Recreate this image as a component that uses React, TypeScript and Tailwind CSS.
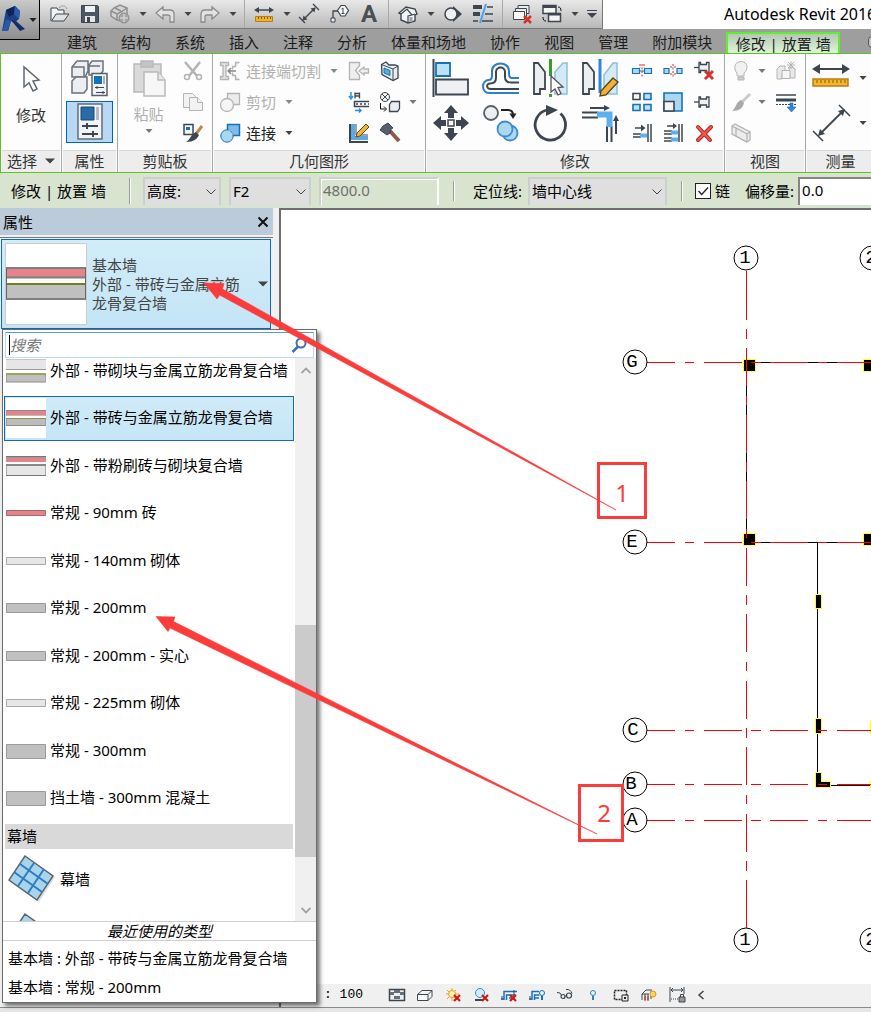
import type { ReactNode } from "react";
import clsx from "clsx";

const INK = "#3d4650";
const BLUE = "#1572b8";
const SKY = "#abd8f0";
const DIM = "#b4b4b4";

/* ---------- small helpers ---------- */

function Svg({ size, children, className }: { size: number; children: ReactNode; className?: string }) {
  return (
    <svg width={size} height={size} viewBox={`0 0 ${size} ${size}`} fill="none" className={clsx("shrink-0 overflow-visible", className)}>
      {children}
    </svg>
  );
}

function Caret({ color = "#444", wide = false }: { color?: string; wide?: boolean }) {
  return (
    <svg width="10" height="6" viewBox="0 0 10 6" className="shrink-0">
      <path d={wide ? "M0 0.5h10L5 5.5z" : "M1.5 1h7L5 5z"} fill={color} />
    </svg>
  );
}

function IconButton({ label, className, children }: { label: string; className?: string; children: ReactNode }) {
  return (
    <button type="button" aria-label={label} className={clsx("flex shrink-0 items-center justify-center", className)}>
      {children}
    </button>
  );
}

/* ---------- quick access icons (20px) ---------- */

const quickIcons = {
  open: (
    <>
      <path d="M1 17V4h6l1 2h6v4" fill="#f4f4f4" stroke={INK} />
      <path d="M1.5 17 6 10h13l-5 7z" fill="#dfe3e8" stroke={INK} />
      <path d="M9 4c3-3 6-3 8 1" stroke="#999" />
    </>
  ),
  save: (
    <>
      <path d="M1.5 1.5h16l1 1v16h-17z" fill="#4d5763" stroke={INK} />
      <path d="M5 2h10v6H5z" fill="#f1f1f1" />
      <path d="M5 12h10v6H5z" fill="#e6e6e6" />
      <path d="M7 13h3v5H7z" fill={INK} />
    </>
  ),
  sync: (
    <>
      <path d="M4 4 10 1l7 3v6l-6 7-4-1-6-4V7z" fill="#d4d4d4" stroke="#8f8f8f" strokeWidth="1.5" />
      <path d="M1 7l6 3 4-2 6-4M7 10v6M5 4l6 3" stroke="#8f8f8f" strokeWidth="1.5" />
      <circle cx="14" cy="14" r="5" fill="#a8a8a8" stroke="#8a8a8a" />
      <path d="M10 14h8M14 10v8" stroke="#e0e0e0" />
    </>
  ),
  undo: <path d="M1 9 8 3v3h7c3 0 4 2 4 4v8h-4v-5c0-1-1-2-2-2H8v4z" fill="#e2e2e2" stroke="#8c8c8c" strokeWidth="1.3" />,
  redo: <path d="M19 9 12 3v3H5c-3 0-4 2-4 4v8h4v-5c0-1 1-2 2-2h5v4z" fill="#e2e2e2" stroke="#8c8c8c" strokeWidth="1.3" />,
  measure: (
    <>
      <path d="M2 6h16" stroke={INK} strokeWidth="1.5" />
      <path d="M0 6l5-3v6zM20 6l-5-3v6z" fill={INK} />
      <path d="M1.5 12.5h17v5h-17z" fill="#f0b428" stroke="#b97d10" />
      <path d="M4.5 13v2M7.5 13v2M10.5 13v2M13.5 13v2M16.5 13v2" stroke="#8a5a08" />
    </>
  ),
  aligned: (
    <>
      <path d="M4 16 16 4" stroke={INK} strokeWidth="1.5" />
      <path d="M3.5 16.5l1-5 4 4zM16.5 3.5l-1 5-4-4z" fill={INK} />
      <path d="M0 13l6 6M14 0l6 6" stroke={INK} strokeWidth="1.3" />
    </>
  ),
  tag: (
    <>
      <path d="M12 1.5h4l3.500 5-3.500 5.500h-4L8.500 6.500z" fill="#f8f8f8" stroke={INK} strokeWidth="1.200" />
      <path d="M12.500 5l1.500-1v5.500M12.500 9.500h3" stroke={INK} />
      <path d="M9 7H4v8" stroke={INK} strokeWidth="1.300" />
      <path d="M2 14h4v4H2z" fill="#eee" stroke={INK} />
    </>
  ),
  letter: (
    <text x="10" y="18" textAnchor="middle" fontSize="24" fontWeight="700" fill="#4a4f55" fontFamily="Roboto, sans-serif">
      A
    </text>
  ),
  house: (
    <>
      <path d="M1 9 8 3l9 2 2 5-2 1v6l-7 2-7-3v-6z" fill="#f3f4f6" stroke={INK} strokeWidth="1.400" />
      <path d="M3 10l6-5 5 6-4 1v7M14 11l3-1" stroke={INK} strokeWidth="1.200" />
      <path d="M11.500 13h3v5h-3z" fill="#9aa3ad" />
    </>
  ),
  section: (
    <>
      <path d="M10 2l9 8-9 8z" fill={INK} />
      <circle cx="8" cy="10" r="6" fill="#eef0f2" stroke={INK} strokeWidth="1.500" />
    </>
  ),
  thin: (
    <>
      <path d="M0 3h9M0 10h7" stroke={INK} strokeWidth="4" />
      <path d="M0 17h5M14 3h6M12 10h8M9 17h11" stroke={INK} strokeWidth="1.500" />
      <path d="M13 0 7 19" stroke="#4ba3f0" strokeWidth="2" />
    </>
  ),
  closeHidden: (
    <>
      <path d="M6 1.500h11v8H6z" fill="#eee" stroke={INK} />
      <path d="M3.500 4.500h11v8h-11z" fill="#eee" stroke={INK} />
      <path d="M1.500 7.500h11v8h-11z" fill="#f8f8f8" stroke={INK} />
      <path d="M12 12l7 7M19 12l-7 7" stroke="#d8322c" strokeWidth="2.500" />
    </>
  ),
  windows: (
    <>
      <path d="M1 1.500h13v8H1z" fill="#f4f4f4" stroke={INK} strokeWidth="1.500" />
      <path d="M1 3h13M7 10h12" stroke={INK} strokeWidth="2" />
      <path d="M6.500 9.500h12v8h-12z" fill="#f4f4f4" stroke={INK} strokeWidth="1.500" />
      <path d="M6.500 10.500h12" stroke={INK} strokeWidth="2" />
      <path d="M16 3c2 0 3 1 3 4M4 17c-2 0-3-1-3-4" stroke="#111" />
    </>
  ),
};

function Quick({ name, label }: { name: keyof typeof quickIcons; label: string }) {
  return (
    <IconButton label={label} className="h-7 w-[30px]">
      <Svg size={20}>{quickIcons[name]}</Svg>
    </IconButton>
  );
}

function QuickMore() {
  return (
    <IconButton label="更多" className="h-7 w-[15px]">
      <Caret />
    </IconButton>
  );
}

function QuickDivider() {
  return <span className="mx-1 h-7 w-px shrink-0 bg-[#a9a9a9]" />;
}

function QuickAccess() {
  return (
    <div className="flex h-[29px] bg-white">
      <div className="flex shrink-0 items-start border-r border-b border-[#777] bg-linear-to-b from-[#e9e9e9] to-[#b8b8b8] pl-[45px]">
        <Quick name="open" label="打开" />
        <Quick name="save" label="保存" />
        <Quick name="sync" label="同步" />
        <QuickMore />
        <Quick name="undo" label="放弃" />
        <QuickMore />
        <Quick name="redo" label="重做" />
        <QuickMore />
        <QuickDivider />
        <Quick name="measure" label="测量" />
        <QuickMore />
        <Quick name="aligned" label="对齐尺寸标注" />
        <Quick name="tag" label="按类别标记" />
        <Quick name="letter" label="文字" />
        <QuickDivider />
        <Quick name="house" label="默认三维视图" />
        <QuickMore />
        <Quick name="section" label="剖面" />
        <Quick name="thin" label="细线" />
        <QuickDivider />
        <Quick name="closeHidden" label="关闭隐藏窗口" />
        <Quick name="windows" label="切换窗口" />
        <QuickMore />
        <IconButton label="自定义" className="h-7 w-[20px]">
          <svg width="10" height="8" viewBox="0 0 10 8">
            <path d="M0 0.500h10" stroke={INK} />
            <path d="M0 3h10L5 8z" fill={INK} />
          </svg>
        </IconButton>
      </div>
      <h1 className="min-w-0 flex-1 overflow-hidden pl-[121px] text-base leading-[29px] whitespace-nowrap">
        Autodesk Revit 2016
      </h1>
    </div>
  );
}

/* ---------- tabs ---------- */

const tabs = ["建筑", "结构", "系统", "插入", "注释", "分析", "体量和场地", "协作", "视图", "管理", "附加模块"];

function Tabs() {
  return (
    <nav className="flex h-6 items-end overflow-hidden bg-[#9e9e9e] pl-[55px]">
      {tabs.map((tab) => (
        <button key={tab} type="button" className="h-6 shrink-0 px-3 pt-0.5 text-[#1c1c1c]">
          {tab}
        </button>
      ))}
      <button
        type="button"
        className="ml-0.5 h-[21px] w-[114px] shrink-0 border-2 border-b-0 border-[#5bf02a] bg-linear-to-b from-[#b5c6b5] to-[#dff6d6] leading-[18px] whitespace-nowrap text-[#1c1c1c]"
      >
        修改 | 放置 墙
      </button>
      <span className="mb-[5px] ml-7 h-3 w-4 shrink-0 rounded-sm border border-[#555] bg-[#c8c8c8]" />
    </nav>
  );
}

/* ---------- ribbon icons, small (20px) ---------- */

const smallIcons = {
  scissors: (
    <g stroke={DIM} strokeWidth="2.500">
      <path d="M2 1 14 15M17 1 6 15" />
      <circle cx="4" cy="16" r="2.500" strokeWidth="1.500" />
      <circle cx="16" cy="16" r="2.500" strokeWidth="1.500" />
    </g>
  ),
  copyDoc: (
    <g stroke={DIM} fill="#f2f2f2">
      <path d="M.500 1.500h9l3 3v11H.500z" />
      <path d="M6.500 5.500h8l5 5v8h-13z" />
      <path d="M14.500 5.500v5h5" />
    </g>
  ),
  match: (
    <>
      <path d="M1 1.500h9v10H1z" fill="#f4f6f8" stroke={INK} strokeWidth="1.500" />
      <path d="M3 4h4v3H3z" fill={BLUE} />
      <path d="M19 3l-6 8" stroke="#b98a4a" strokeWidth="3" />
      <path d="M13 9l3 3c-2 4-5 7-13 7 4-2 5-8 10-10z" fill={INK} />
    </>
  ),
  cope: (
    <g stroke={DIM} fill="#e4e4e4" strokeWidth="1.300">
      <path d="M.500 1.500h8v3H6v11h2.500v3h-8v-3H3v-11H.500z" />
      <path d="M19.500 1.500h-4v4h-3v3M19.500 18.500h-4v-4h-3v-3" />
      <path d="M8 10h8M11 7l-3 3 3 3" stroke="#888" />
    </g>
  ),
  cut: (
    <g stroke={DIM} fill="#f6f6f6" strokeWidth="1.300">
      <path d="M7.500 1.500h12v11h-12z" fill="#ececec" />
      <circle cx="7" cy="13" r="6.500" />
    </g>
  ),
  join: (
    <g stroke={BLUE}>
      <path d="M7.500 1.500h12v11h-12z" fill="#7fbde8" strokeWidth="1.500" />
      <circle cx="7" cy="13" r="6.200" fill={SKY} />
      <path d="M8.300 7.500h4.500v4.500" stroke="#7fbde8" />
    </g>
  ),
  coping: (
    <g stroke={DIM} fill="#efefef" strokeWidth="1.300">
      <path d="M.500 1.500h10v3l-4 5 4 5v4H.500z" />
      <path d="M10 10l5-4v2h4.500v4H15v2z" />
    </g>
  ),
  wallOpening: (
    <>
      <path d="M1.500 3.500 6 1l3 3h6l3 1v12l-5 2.500-11-6z" fill="#e9edf1" stroke={INK} strokeWidth="1.300" />
      <path d="M13 8v11M13 8l5-3M13 8 1.500 3.500" stroke={INK} />
      <path d="M4 7l6 2.500v5L4 12z" fill="#58a9e0" stroke={BLUE} />
    </>
  ),
  beam: (
    <>
      <path d="M2 0v5M0 4l2 3 2-3M6 18.500h6M10 16.500l2 2-2 2" stroke="#2f8fe0" strokeWidth="1.500" />
      <path d="M6 .500v6M10.500 .500v6M6 1.500h5M6 4h5" stroke={INK} strokeWidth="1.300" />
      <path d="M5 9.500h15M5 14.500h15M5.500 9v6" stroke={INK} strokeWidth="1.500" />
      <path d="M7 12h13" stroke={INK} strokeWidth="1.500" strokeDasharray="2 2" />
    </>
  ),
  split: (
    <>
      <circle cx="5" cy="5" r="4.500" fill="#f4f4f4" stroke={INK} />
      <path d="M2 2l6 6M8 2 2 8" stroke={INK} />
      <path d="M.500 11v6h5M4 14.500 6.500 17 4 19.500" stroke="#111" />
      <path d="M9.500 12.500l2-3h8v7l-2 3h-8z" fill="#eceff2" stroke={INK} strokeWidth="1.300" />
    </>
  ),
  cornerEdit: (
    <>
      <path d="M1 1v18h18" stroke={INK} strokeWidth="2" />
      <path d="M4 1v14h15" stroke="#5aaae6" strokeWidth="4" />
      <path d="M7 1v11h12" stroke={INK} />
      <path d="M17 1l3 3-9 9-4 1 1-4z" fill="#f0b23a" stroke="#6a4b12" />
    </>
  ),
  hammer: (
    <>
      <path d="M10 8l9 10" stroke="#8a5b4c" strokeWidth="4" />
      <path d="M3 3l5-3 5 5-2 1-1 4-3 2-7-5z" fill="#56606b" stroke={INK} />
    </>
  ),
  splitElement: (
    <>
      <path d="M.500 7.500h7v5h-7zM12.500 7.500h7v5h-7z" fill={SKY} stroke={BLUE} strokeWidth="1.200" />
      <path d="M7 10h6" stroke={BLUE} />
      <path d="M10 3v14M8 3v4M12 3v4" stroke="#d8322c" strokeDasharray="2 1.500" />
    </>
  ),
  splitGap: (
    <>
      <path d="M1 7.500h5v5H1zM14 7.500h5v5h-5z" fill={SKY} stroke={BLUE} strokeWidth="1.200" />
      <path d="M10 3v14M8 5v3M12 5v3M8 12v3M12 12v3" stroke="#d8322c" strokeDasharray="2 1.500" />
    </>
  ),
  unpin: (
    <>
      <path d="M0 6.500h5" stroke={INK} strokeWidth="1.300" />
      <path d="M5 1.500h1.500v2h6v-2H15v10h-2.500v-2h-6v2H5z" fill="#eef0f3" stroke={INK} strokeWidth="1.300" />
      <path d="M11 10l8 8M19 10l-8 8" stroke="#d8322c" strokeWidth="3" />
    </>
  ),
  array: (
    <>
      <path d="M1 1.500h7v6H1z" fill="#f3f4f6" stroke={INK} strokeWidth="1.600" />
      <path d="M12 1.500h7v6h-7zM1 12.500h7v6H1zM12 12.500h7v6h-7z" fill="#bfe1f4" stroke={BLUE} strokeWidth="1.600" />
    </>
  ),
  scale: (
    <>
      <path d="M1 1h18v18H1z" fill={SKY} stroke={BLUE} strokeWidth="1.600" />
      <path d="M1 9.500h10V19H1z" fill="#f3f4f6" stroke={INK} strokeWidth="1.600" />
    </>
  ),
  pin: (
    <>
      <path d="M0 10h5" stroke={INK} strokeWidth="1.300" />
      <path d="M5 5h1.500v2h6V5H15v10h-2.500v-2h-6v2H5z" fill="#eef0f3" stroke={INK} strokeWidth="1.300" />
    </>
  ),
  trimSingle: (
    <>
      <path d="M16 1v18M19 1v18" stroke={INK} strokeWidth="1.500" />
      <path d="M1 11h8M1 14h8" stroke={INK} strokeWidth="1.500" />
      <path d="M8 12.500h7" stroke="#5ab0f0" strokeWidth="4" />
      <path d="M3 5h7" stroke={INK} strokeWidth="1.500" />
      <path d="M9 1.500 13.500 5 9 8.500z" fill={INK} />
    </>
  ),
  trimMulti: (
    <>
      <path d="M16 1v18M19 1v18" stroke={INK} strokeWidth="1.500" />
      <path d="M1 8h8M1 11h8M1 15h8M1 18h8" stroke={INK} strokeWidth="1.300" />
      <path d="M8 9.500h7M8 16.500h7" stroke="#5ab0f0" strokeWidth="4" />
      <path d="M4 3h7" stroke={INK} strokeWidth="1.500" />
      <path d="M10 0l4 3-4 3z" fill={INK} />
    </>
  ),
  remove: (
    <>
      <path d="M4 4l12 13M17 4 4 17" stroke="#b3221d" strokeWidth="4" strokeLinecap="round" />
      <path d="M4 4l12 13M17 4 4 17" stroke="#ee5a50" strokeWidth="2" strokeLinecap="round" />
    </>
  ),
  bulb: (
    <g stroke={DIM} fill="#f1f1f1">
      <path d="M6 12C3 9 2 1 10 .500 18 1 17 9 13 12v3H6z" />
      <path d="M7 16h6v3H7z" fill="#cfcfcf" />
    </g>
  ),
  displace: (
    <g stroke={DIM} fill="#e9e9e9">
      <path d="M1 8l3-3h5v8H6v5H1zM13 7l3-1 3 2v9h-5z" />
      <path d="M6 9.500h8v8H6z" fill="#f6f6f6" />
      <path d="M11 4h8M15 0v8M12 1l6 6M18 1l-6 6" />
    </g>
  ),
  brush: (
    <>
      <path d="M19 2l-8 8" stroke="#c9c9c9" strokeWidth="3" />
      <path d="M10 8l3 3c-1 5-5 8-12 8 4-3 4-9 9-11z" fill="#a9a9a9" />
    </>
  ),
  lineweight: (
    <>
      <path d="M0 3h20" stroke={INK} strokeWidth="1.500" />
      <path d="M0 8h20" stroke={INK} strokeWidth="3" />
      <path d="M0 12.500h20" stroke={INK} strokeDasharray="2 1" />
      <path d="M14 11h3v4h3l-4.500 5L11 15h3z" fill="#2d86dd" stroke="#1b5fa8" strokeWidth=".500" />
    </>
  ),
  box: (
    <g stroke={DIM} fill="#ededed" strokeWidth="1.300">
      <path d="M1 3l3-2 15 8v8l-3 2L1 11z" />
      <path d="M1 3l15 8v8M16 11l3-2M5 5v8l11 6" />
    </g>
  ),
};

type SmallName = keyof typeof smallIcons;

function Small({ name, label }: { name: SmallName; label: string }) {
  return (
    <IconButton label={label} className="h-[31px] w-5">
      <Svg size={20}>{smallIcons[name]}</Svg>
    </IconButton>
  );
}

function SmallWithMenu({ name, label, gap }: { name: SmallName; label: string; gap?: string }) {
  return (
    <div className={clsx("flex items-center", gap ?? "gap-1.5")}>
      <Small name={name} label={label} />
      <Caret color="#777" />
    </div>
  );
}

/* ---------- ribbon icons, large (38px) ---------- */

const largeIcons = {
  typeProps: (
    <>
      <g fill="#eceef1" stroke="#6b727a" strokeWidth="1.500">
        <path d="M1 8l5-6h11v10l-3 6H1zM18 6l3-4h11v10l-3 4H18z" />
        <path d="M1 22l4-4h11v12l-3 4H1z" />
        <path d="M1 8h12v10M18 7h11" />
      </g>
      <path d="M21 14.500h15v22H21z" fill="#f3f4f6" stroke="#59616a" strokeWidth="1.500" />
      <path d="M23 17h8v8h-8z" fill={BLUE} />
      <path d="M32 17h2v8h-2z" fill="#aab1ba" />
      <path d="M24 28.500h9M26 27v3M25 33.500h9M32 32v3" stroke={INK} />
    </>
  ),
  properties: (
    <>
      <path d="M7 1h24v35H7z" fill="#f1f3f5" stroke="#626c78" strokeWidth="1.500" />
      <path d="M10 4h13v13H10z" fill="#276ba8" stroke="#174a7c" />
      <path d="M25 4h3v13h-3z" fill="#b7bcc3" />
      <path d="M11 23h16M16 20v6M11 31h16M22 28v6" stroke={INK} strokeWidth="2" />
    </>
  ),
  paste: (
    <g stroke="#b9b9b9" strokeWidth="1.500">
      <path d="M4 5h27v28H4z" fill="#dadada" />
      <path d="M11 2h12v6H11z" fill="#c4c4c4" />
      <path d="M14 13h14l7 8v16H14z" fill="#f6f6f6" />
      <path d="M28 13v8h7" fill="#e7e7e7" />
    </g>
  ),
  align: (
    <>
      <path d="M1.500 0v38" stroke={INK} strokeWidth="2" />
      <path d="M4 4h14v13H4z" fill="#bde1f5" stroke={BLUE} strokeWidth="1.800" />
      <path d="M4 20.500h32v15H4z" fill="#eef0f3" stroke={INK} strokeWidth="1.800" />
    </>
  ),
  offset: (
    <>
      <path
        d="M37 34H7c-3.500 0-6-3-6-6.500S3.500 21 6.500 21C9 21 10 20 10 17v-5c0-10 17-10 17 0v3c0 3 1 4 3 4h7"
        stroke="#2f7fc4"
        strokeWidth="2"
      />
      <path
        d="M37 30H9c-5 0-5-5.500-1-5.500 4 0 6-2 6-6V13c0-6 9-6 9 0v5c0 4 2 5.500 6 5.500h8"
        stroke={INK}
        strokeWidth="2"
      />
    </>
  ),
  mirrorPick: (
    <>
      <path d="M2 4h4l7 9v17H8v5H2z" fill="#eceef1" stroke={INK} strokeWidth="1.800" />
      <path d="M35 4h-4l-8 9v22h12z" fill="#d4ebf7" stroke="#8cc0de" strokeWidth="1.500" />
      <path d="M18.500 0v17M18.500 35v3" stroke="#33a02c" strokeWidth="3" />
      <path d="M19 17v16l4-3 3 6 3-1.500-3-6 5-.500z" fill="#fff" stroke="#555" strokeWidth="1.300" />
    </>
  ),
  mirrorDraw: (
    <>
      <path d="M1 4h4l7 9v17H7v5H1z" fill="#eceef1" stroke={INK} strokeWidth="1.800" />
      <path d="M35 4h-4l-9 12v19h13z" fill="#d4ebf7" stroke="#8cc0de" strokeWidth="1.500" />
      <path d="M18 0v34" stroke="#2a86e0" strokeWidth="3" />
      <path d="M31 19l5 4-12 13-6 1 1-5z" fill="#f0b23a" stroke="#5b4110" strokeWidth="1.300" />
    </>
  ),
  move: (
    <>
      <path
        d="M19 1l7 8h-4v5h-6V9h-4zM19 37l-7-8h4v-5h6v5h4zM1 19l8-7v4h5v6H9v4zM37 19l-8 7v-4h-5v-6h5v-4z"
        fill={INK}
      />
      <path d="M16 16h6v6h-6z" fill="#fff" stroke={INK} strokeWidth="1.500" />
    </>
  ),
  copy: (
    <>
      <circle cx="9" cy="9" r="7" fill="#eceef1" stroke="#59616a" strokeWidth="1.800" />
      <path d="M19 6h7c3.500 0 5 2 5 5" stroke="#222" strokeWidth="2" />
      <path d="M27.500 9.500h7L31 15z" fill="#222" />
      <circle cx="28" cy="29" r="7.500" fill={SKY} stroke="#3c8dcc" strokeWidth="1.800" />
      <circle cx="23" cy="25" r="7.500" fill={SKY} stroke="#3c8dcc" strokeWidth="1.800" />
    </>
  ),
  rotate: (
    <>
      <path d="M28.500 9.500A15.200 15.200 0 1 1 15 6" stroke={INK} strokeWidth="2.800" />
      <path d="M14 1l12 5-12 6z" fill={INK} />
    </>
  ),
  trim: (
    <>
      <path d="M8 4h16" stroke={INK} strokeWidth="2" />
      <path d="M22 1l6 3-6 3zM31 17l3-6 3 6z" fill={INK} />
      <path d="M34 16v14" stroke={INK} strokeWidth="2" />
      <path d="M0 8.500h16M0 13.500h16M25 22v16M29.500 22v16" stroke={INK} strokeWidth="2" />
      <path d="M15 10.500h12.500V23" stroke="#5ab0f0" strokeWidth="6" />
    </>
  ),
  ruler: (
    <>
      <path d="M4 10h30" stroke={INK} strokeWidth="2" />
      <path d="M0 10l8-5v10zM38 10l-8 5V5z" fill={INK} />
      <path d="M1 20h35v7H1z" fill="#f3b62c" stroke="#b97d10" strokeWidth="1.500" />
      <path d="M5 21v3M9 21v3M13 21v3M17 21v3M21 21v3M25 21v3M29 21v3M33 21v3" stroke="#8a5a08" />
    </>
  ),
  dimension: (
    <>
      <path d="M8 30 31 7" stroke={INK} strokeWidth="1.800" />
      <path d="M6 32l2-7 5 5zM33 5l-2 7-5-5z" fill={INK} />
      <path d="M1 27l10 10M27 1l11 11" stroke={INK} strokeWidth="1.500" />
    </>
  ),
};

function Large({ name, label }: { name: keyof typeof largeIcons; label: string }) {
  return (
    <IconButton label={label} className="h-[45px] w-[38px]">
      <Svg size={38}>{largeIcons[name]}</Svg>
    </IconButton>
  );
}

/* ---------- ribbon ---------- */

function Panel({ title, menu, className, children }: { title: string; menu?: boolean; className: string; children: ReactNode }) {
  return (
    <section className={clsx("flex flex-col border-r border-[#a2aba2] bg-[#fdfdfd]", className)}>
      <div className="flex h-24 pt-px">{children}</div>
      <h2 className="mx-px flex h-[22px] items-center justify-center gap-2 border-t border-[#d8d8d8] bg-[#ededed] pb-0.5 whitespace-nowrap text-[#333]">
        {title}
        {menu && <Caret wide />}
      </h2>
    </section>
  );
}

function GeometryRow({ icon, label, disabled }: { icon: SmallName; label: string; disabled?: boolean }) {
  return (
    <button type="button" disabled={disabled} className={clsx("flex h-[31px] items-center gap-1.5 whitespace-nowrap", disabled ? "text-[#b0b0b0]" : "text-[#222]")}>
      <Svg size={20}>{smallIcons[icon]}</Svg>
      {label}
      <span className="pl-0.5">
        <Caret color={disabled ? "#888" : "#444"} />
      </span>
    </button>
  );
}

function Ribbon() {
  return (
    <div className="flex overflow-hidden border-y border-l border-[#5ac524] bg-white">
      <Panel title="选择" menu className="w-[61px] shrink-0">
        <button type="button" className="flex w-full flex-col items-center pt-2.5 text-[#333]">
          <svg width="20" height="30" viewBox="0 0 20 30" fill="none">
            <path d="M3 2v20l5-4 4 8 4-2-4-8 6-1z" fill="#fff" stroke="#5f6770" strokeWidth="1.500" />
          </svg>
          <span className="pt-2.5">修改</span>
        </button>
      </Panel>

      <Panel title="属性" className="w-14 shrink-0">
        <div className="flex w-full flex-col items-center">
          <Large name="typeProps" label="类型属性" />
          <button type="button" aria-label="属性" aria-pressed="true" className="mt-px flex h-[42px] w-[47px] items-center justify-center border border-[#0067b8] bg-[#b9d8f4]">
            <Svg size={38}>{largeIcons.properties}</Svg>
          </button>
        </div>
      </Panel>

      <Panel title="剪贴板" className="w-[95px] shrink-0">
        <button type="button" disabled className="flex w-[61px] flex-col items-center text-[#b0b0b0]">
          <span className="flex h-[45px] items-center">
            <Svg size={38}>{largeIcons.paste}</Svg>
          </span>
          <span className="pt-1 pb-1">粘贴</span>
          <Caret color="#777" />
        </button>
        <div className="ml-1">
          <Small name="scissors" label="剪切" />
          <Small name="copyDoc" label="复制到剪贴板" />
          <Small name="match" label="匹配类型属性" />
        </div>
      </Panel>

      <Panel title="几何图形" className="w-[213px] shrink-0">
        <div className="flex w-[136px] flex-col items-start pl-[7px]">
          <GeometryRow icon="cope" label="连接端切割" disabled />
          <GeometryRow icon="cut" label="剪切" disabled />
          <GeometryRow icon="join" label="连接" />
        </div>
        <div className="w-[31px]">
          <Small name="coping" label="应用连接端切割" />
          <Small name="beam" label="梁柱连接" />
          <Small name="cornerEdit" label="墙连接" />
        </div>
        <div>
          <Small name="wallOpening" label="墙洞口" />
          <SmallWithMenu name="split" label="拆分面" gap="gap-2" />
          <Small name="hammer" label="拆除" />
        </div>
      </Panel>

      <Panel title="修改" className="w-[299px] shrink-0">
        <div className="grid grid-cols-4 gap-x-3 self-start pl-1.5">
          <Large name="align" label="对齐" />
          <Large name="offset" label="偏移" />
          <Large name="mirrorPick" label="镜像 - 拾取轴" />
          <Large name="mirrorDraw" label="镜像 - 绘制轴" />
          <Large name="move" label="移动" />
          <Large name="copy" label="复制" />
          <Large name="rotate" label="旋转" />
          <Large name="trim" label="修剪/延伸为角" />
        </div>
        <div className="ml-3 grid grid-cols-3 gap-x-[11px] self-start">
          <Small name="splitElement" label="拆分图元" />
          <Small name="splitGap" label="用间隙拆分" />
          <Small name="unpin" label="解锁" />
          <Small name="array" label="阵列" />
          <Small name="scale" label="缩放" />
          <Small name="pin" label="锁定" />
          <Small name="trimSingle" label="修剪/延伸单个图元" />
          <Small name="trimMulti" label="修剪/延伸多个图元" />
          <Small name="remove" label="删除" />
        </div>
      </Panel>

      <Panel title="视图" className="w-[81px] shrink-0">
        <div className="w-[51px] pl-1.5">
          <SmallWithMenu name="bulb" label="在视图中隐藏" />
          <SmallWithMenu name="brush" label="替换视图中的图形" />
          <Small name="box" label="选择框" />
        </div>
        <div>
          <Small name="displace" label="置换图元" />
          <Small name="lineweight" label="线处理" />
        </div>
      </Panel>

      <Panel title="测量" className="min-w-[69px] flex-1 border-r-0">
        <div className="pl-1.5">
          <div className="flex items-center gap-2">
            <Large name="ruler" label="测量" />
            <Caret />
          </div>
          <div className="flex items-center gap-2">
            <Large name="dimension" label="尺寸标注" />
            <Caret />
          </div>
        </div>
      </Panel>
    </div>
  );
}

/* ---------- options bar ---------- */

function OptionSelect({ id, value, className }: { id: string; value: string; className: string }) {
  return (
    <div className={clsx("relative shrink-0", className)}>
      <select id={id} aria-label={value} defaultValue={value} className="h-7 w-full appearance-none border-2 border-b-0 border-[#cccfcc] bg-[#dfdfdf] pb-0.5 pl-0.5 text-black">
        <option>{value}</option>
      </select>
      <svg width="10" height="6" viewBox="0 0 10 6" fill="none" className="pointer-events-none absolute top-3 right-[5px]">
        <path d="M.500 .500 5 5 9.500 .500" stroke="#444" />
      </svg>
    </div>
  );
}

function OptionDivider() {
  return <span className="h-[26px] w-0.5 shrink-0 border-r border-l border-r-white border-l-[#9a9a9a]" />;
}

function OptionsBar() {
  return (
    <div className="flex h-[35px] items-center overflow-hidden bg-[#d8e3d0] whitespace-nowrap text-black">
      <span className="w-[129px] shrink-0 pl-[11px]">修改 | 放置 墙</span>
      <OptionDivider />
      <OptionSelect id="height-mode" value="高度:" className="ml-3 w-[78px]" />
      <OptionSelect id="level" value="F2" className="ml-2 w-[82px]" />
      <input
        aria-label="高度值"
        disabled
        defaultValue="4800.0"
        className="ml-2 h-7 w-[120px] shrink-0 border-2 border-b-0 border-[#cccfcc] border-r-white bg-[#d8e3d0] pb-1 pl-0.5 text-[#707070] inset-shadow-[1px_1px_0_#fff]"
      />
      <span className="ml-3.5">
        <OptionDivider />
      </span>
      <label htmlFor="location-line" className="ml-[18px]">
        定位线:
      </label>
      <OptionSelect id="location-line" value="墙中心线" className="ml-1.5 w-[139px]" />
      <span className="ml-3.5">
        <OptionDivider />
      </span>
      <label className="ml-3 flex items-center gap-1">
        <span className="relative size-4">
          <input type="checkbox" defaultChecked className="block size-4 appearance-none border border-[#222] bg-white" />
          <svg width="16" height="16" viewBox="0 0 16 16" fill="none" className="pointer-events-none absolute inset-0">
            <path d="M3.500 8l3.200 3.500L13 4.500" stroke="#222" strokeWidth="1.300" />
          </svg>
        </span>
        链
      </label>
      <label htmlFor="offset" className="ml-[15px]">
        偏移量:
      </label>
      <input id="offset" defaultValue="0.0" className="ml-1 h-7 w-24 min-w-0 flex-1 border-2 border-r-0 border-b-0 border-[#858585] bg-white pb-1 pl-0.5" />
    </div>
  );
}

/* ---------- properties palette ---------- */

type WallKind = "block" | "brick" | "plaster" | "thinBrick" | "masonry" | "solid" | "thick";

const wallDrawings: Record<WallKind, ReactNode> = {
  block: (
    <>
      <path d="M0 9h40v22H0z" fill="#c0c0c0" stroke="#8c8c8c" />
      <path d="M0 9h40v9H0z" fill="#e6e6e6" />
      <path d="M0 18.500h40" stroke="#999" />
      <path d="M0 19h40v3H0z" fill="#fff" />
      <path d="M0 23h40" stroke="#a0a060" strokeWidth="2" />
    </>
  ),
  brick: (
    <>
      <path d="M0 12.500h40v15H0z" fill="#bcbcbc" stroke="#8c8c8c" />
      <path d="M0 13h40v4H0z" fill="#e5838a" />
      <path d="M0 18h40v2H0z" fill="#fff" />
      <path d="M0 20.500h40" stroke="#8f8f45" />
    </>
  ),
  plaster: (
    <>
      <path d="M0 10.500h40v19H0z" fill="#e6e6e6" stroke="#777" />
      <path d="M0 11h40v2H0z" fill="#999" />
      <path d="M0 12h40v4H0z" fill="#e5838a" />
      <path d="M0 16h40v2H0z" fill="#fff" />
      <path d="M0 19h40" stroke="#888" strokeWidth="2" />
    </>
  ),
  thinBrick: <path d="M.500 17.500h39v5H.500z" fill="#e5838a" stroke="#a56a6e" />,
  masonry: <path d="M.500 16.500h39v7H.500z" fill="#e6e6e6" stroke="#aaa" />,
  solid: <path d="M.500 15.500h39v9H.500z" fill="#c0c0c0" stroke="#9b9b9b" />,
  thick: <path d="M.500 13.500h39v14H.500z" fill="#c0c0c0" stroke="#9b9b9b" />,
};

const wallTypes: { name: string; kind: WallKind; selected?: boolean }[] = [
  { name: "外部 - 带砌块与金属立筋龙骨复合墙", kind: "block" },
  { name: "外部 - 带砖与金属立筋龙骨复合墙", kind: "brick", selected: true },
  { name: "外部 - 带粉刷砖与砌块复合墙", kind: "plaster" },
  { name: "常规 - 90mm 砖", kind: "thinBrick" },
  { name: "常规 - 140mm 砌体", kind: "masonry" },
  { name: "常规 - 200mm", kind: "solid" },
  { name: "常规 - 200mm - 实心", kind: "solid" },
  { name: "常规 - 225mm 砌体", kind: "masonry" },
  { name: "常规 - 300mm", kind: "thick" },
  { name: "挡土墙 - 300mm 混凝土", kind: "thick" },
];

function CurtainIcon() {
  return (
    <svg width="48" height="48" viewBox="0 0 48 48" fill="none" className="shrink-0">
      <path d="M18 3 47 22 31 47 2 27z" fill="#00000022" />
      <path d="M17 1 45 21 29 45 1 25z" fill="#a9d5ec" stroke="#59656f" strokeWidth="1.500" />
      <path d="M26 8 10 31M36 14 20 38M12 9l28 20M6 17l28 20" stroke="#2f7cc0" strokeWidth="2" />
    </svg>
  );
}

function TypeMenu() {
  return (
    <div className="absolute top-full left-px z-10 w-[315px] border border-[#6c6c6c] bg-white shadow-[3px_3px_4px_#00000088]">
      <div className="m-0.5 mb-0 flex h-[26px] items-center border border-[#bcdcec] border-t-[#5b9bd0] pr-1.5 pl-[3px]">
        <input
          aria-label="搜索"
          placeholder="搜索"
          className="h-5 min-w-0 flex-1 border-l border-black italic outline-none placeholder:text-[#777]"
        />
        <svg width="16" height="16" viewBox="0 0 16 16" fill="none">
          <circle cx="10" cy="6" r="4.500" stroke="#3f6cb5" strokeWidth="2" />
          <path d="M7 9.500 1.500 15" stroke="#3f6cb5" strokeWidth="2.500" />
        </svg>
      </div>

      <div className="flex h-[563px]">
        <div className="min-w-0 flex-1 overflow-hidden pl-px">
          <ul className="-mt-[11px] grid h-[475px] auto-rows-fr">
            {wallTypes.map((type) => (
              <li key={type.name} className="flex">
                <button
                  type="button"
                  className={clsx(
                    "my-px flex w-[290px] items-center gap-1 overflow-hidden border px-px whitespace-nowrap",
                    type.selected ? "border-[#1268bd] bg-linear-to-b from-[#d0eaf8] to-[#c5e6f6]" : "border-transparent",
                  )}
                >
                  <svg width="40" height="40" viewBox="0 0 40 40" className="shrink-0 bg-white">
                    {wallDrawings[type.kind]}
                  </svg>
                  <span className="pb-0.5">{type.name}</span>
                </button>
              </li>
            ))}
          </ul>
          <h3 className="mt-0.5 mr-0.5 ml-px h-[25px] bg-[#d9d9d9] pl-0.5 leading-6">幕墙</h3>
          <button type="button" className="flex items-center gap-1 pt-1.5 pl-1">
            <CurtainIcon />
            幕墙
          </button>
          <div className="pt-2.5 pl-1">
            <CurtainIcon />
          </div>
        </div>
        <div className="flex w-[21px] flex-col items-center bg-[#f0f0f0]">
          <svg width="10" height="24" viewBox="0 0 10 24" fill="none">
            <path d="M.500 15 5 10.500 9.500 15" stroke="#a3a3a3" strokeWidth="1.800" />
          </svg>
          <div className="mt-[243px] h-[232px] w-full bg-[#cbcbcb]" />
          <svg width="10" height="24" viewBox="0 0 10 24" fill="none" className="mt-auto">
            <path d="M.500 11 5 15.500 9.500 11" stroke="#a3a3a3" strokeWidth="1.800" />
          </svg>
        </div>
      </div>

      <h3 className="h-5 border-y border-[#cfcfcf] text-center leading-[18px] italic">最近使用的类型</h3>
      <ul className="pt-[3px] pl-[5px] leading-[29px] whitespace-nowrap">
        <li>基本墙 : 外部 - 带砖与金属立筋龙骨复合墙</li>
        <li>基本墙 : 常规 - 200mm</li>
      </ul>
    </div>
  );
}

function Properties() {
  return (
    <aside className="w-[279px] shrink-0 bg-[#f0f0f0] pr-1.5">
      <header className="flex h-[27px] items-center justify-between bg-[#bccbda] pr-1 pl-[3px] text-black">
        属性
        <IconButton label="关闭" className="size-3">
          <Svg size={12}>
            <path d="M1.500 1.500l9 9M10.500 1.500l-9 9" stroke="#111" strokeWidth="2" />
          </Svg>
        </IconButton>
      </header>
      <div className="mt-0.5 border-t border-[#777] pt-px pl-px">
        <div className="relative">
          <button
            type="button"
            aria-expanded="true"
            className="flex h-[90px] w-[270px] items-center border border-[#1268bd] bg-linear-to-b from-[#d2ecf9] to-[#c3e5f6] pr-0.5 pl-[3px] text-left"
          >
            <svg width="82" height="82" viewBox="0 0 82 82" className="shrink-0">
              <path d="M.500 .500h81v81H.500z" fill="#fff" stroke="#ccc" />
              <path d="M1 25h80v32H1z" fill="#c0c0c0" />
              <path d="M1 26h80v8H1z" fill="#e5838a" />
              <path d="M1 35h80v5H1z" fill="#fff" />
              <path d="M1 41h80" stroke="#7b7b22" strokeWidth="2" />
              <path d="M1 25h80M1 34.500h80M1 56h80" stroke="#808080" strokeWidth="2" />
              <path d="M1.500 25v31M80.500 25v31" stroke="#666" />
            </svg>
            <span className="flex-1 pl-[5px] leading-[19px] text-[#444]">
              <span className="block">基本墙</span>
              <span className="block">外部 - 带砖与金属立筋</span>
              <span className="block">龙骨复合墙</span>
            </span>
            <Caret wide />
          </button>
          <TypeMenu />
        </div>
      </div>
    </aside>
  );
}

/* ---------- floor plan ---------- */

const gridDash = "38 9.5 9.5 9.5";

const rowGrids = [
  { name: "G", y: 152, dx: -3 },
  { name: "E", y: 332, dx: -3 },
  { name: "C", y: 520, dx: -2 },
  { name: "B", y: 574, dx: -4 },
  { name: "A", y: 610, dx: -3 },
];

const columns = [
  "M463 150h11v11h-11z",
  "M583 150h11v11h-11z",
  "M463 324h11v11h-11z",
  "M583 324h11v11h-11z",
  "M535 385h5v13h-5z",
  "M535 509h5v14h-5z",
  "M590 512h5v11h-5z",
  "M535 563h5v9h9v5h-14z",
  "M590 572h5v5h-5z",
];

function Bubble({ x, y, name, dx = -1 }: { x: number; y: number; name: string; dx?: number }) {
  return (
    <g>
      <circle cx={x} cy={y} r="12" fill="#fff" stroke="#000" />
      <text
        x={x + dx}
        y={y + 5}
        textAnchor="middle"
        fontSize="19"
        fill="#000"
        fontFamily="'Liberation Sans Narrow', 'Liberation Mono', monospace"
      >
        {name}
      </text>
    </g>
  );
}

function FloorPlan() {
  return (
    <svg width="590" height="774" viewBox="0 0 590 774" fill="none" className="block">
      <g stroke="#000" shapeRendering="crispEdges">
        <path d="M474 152.500h116M474 332.500h116M465.500 160v166M536.500 333v232M549 575.500h41" />
      </g>
      {columns.map((d) => (
        <path key={d} d={d} fill="#000" stroke="#ffff20" strokeWidth="2" paintOrder="stroke" shapeRendering="crispEdges" />
      ))}
      <g stroke="#f00" strokeDasharray={gridDash} shapeRendering="crispEdges">
        {rowGrids.map((row) => (
          <path key={row.name} d={`M356 ${row.y + 0.5}h234`} />
        ))}
        <path d="M465.500 71.500v637" />
      </g>
      <path d="M465.500 61v20M465.500 700v18" stroke="#f00" shapeRendering="crispEdges" />
      {rowGrids.map((row) => (
        <Bubble key={row.name} x={354} y={row.y} name={row.name} dx={row.dx} />
      ))}
      <Bubble x={465} y={48} name="1" />
      <Bubble x={591} y={48} name="2" />
      <Bubble x={465} y={730} name="1" />
      <Bubble x={591} y={730} name="2" />
    </svg>
  );
}

/* ---------- view control bar ---------- */

const redCross = <path d="M9 8l6 6M15 8l-6 6" stroke="#d01818" strokeWidth="2.200" />;

const viewControls: { label: string; icon: ReactNode }[] = [
  {
    label: "详细程度",
    icon: (
      <>
        <path d="M.500 2.500h15v11H.500z" fill="#eee" stroke={INK} strokeWidth="1.500" />
        <path d="M1 5h4v3H1zM11 5h4v3h-4zM5 3h6v3H5zM5 9h6v3H5z" fill="#66707c" />
      </>
    ),
  },
  { label: "视觉样式", icon: <path d="M.500 7.500 5 3.500h10v6l-4 4H.500zM.500 7.500H11l4-4M11 7.500v6" fill="#f8f8f8" stroke={INK} /> },
  {
    label: "日光路径",
    icon: (
      <>
        <path d="M7 1v13M1 7h13M2 3l9 9M11 3 2 12" stroke="#e8a21a" />
        <circle cx="7" cy="7" r="3.500" fill="#fff2b0" stroke="#e8a21a" />
        {redCross}
      </>
    ),
  },
  {
    label: "阴影",
    icon: (
      <>
        <path d="M2 13h8" stroke={INK} strokeWidth="2" />
        <circle cx="7" cy="6" r="4.500" fill="#d5ecf8" stroke="#3c8dcc" />
        {redCross}
      </>
    ),
  },
  {
    label: "裁剪视图",
    icon: (
      <>
        <path d="M0 12h3M3 13V4.500h13M5.500 13V8h9M8 11h3" stroke={BLUE} strokeWidth="1.500" />
        <path d="M1 9v4M13 3v10" stroke={INK} />
        {redCross}
      </>
    ),
  },
  {
    label: "显示裁剪区域",
    icon: (
      <>
        <path d="M0 12h3M3 13V4.500h7M5.500 13V8h5M6 11h4" stroke={BLUE} strokeWidth="1.500" />
        <path d="M1 9v4" stroke={INK} />
        <circle cx="13" cy="6" r="2.500" fill="#e5f3fc" stroke={BLUE} />
        <path d="M13 9v4" stroke={BLUE} strokeWidth="2" />
      </>
    ),
  },
  {
    label: "临时隐藏/隔离",
    icon: (
      <>
        <path d="M0 5.500l3 .500 2 3M9 2.500c3-.500 5 1 6 4" stroke={INK} />
        <circle cx="6" cy="9.500" r="2" stroke={INK} strokeWidth="1.200" />
        <circle cx="12" cy="8.500" r="2.500" stroke={INK} strokeWidth="1.200" />
        <path d="M8 9l1.500-.500" stroke={INK} />
      </>
    ),
  },
  {
    label: "显示隐藏的图元",
    icon: (
      <>
        <circle cx="8" cy="6" r="2.500" fill="#e5f3fc" stroke="#2f7fc4" />
        <path d="M8 9v4" stroke="#2f7fc4" strokeWidth="2" />
      </>
    ),
  },
  {
    label: "临时视图属性",
    icon: (
      <>
        <path d="M1.500 3.500h12v9h-12z" stroke="#222" strokeDasharray="2 1" strokeWidth="1.500" />
        <path d="M9 8h6v6H9z" fill="#eee" stroke="#222" />
        <path d="M11 10h2v2h-2z" fill="#222" />
      </>
    ),
  },
  {
    label: "显示分析模型",
    icon: (
      <>
        <path d="M1 7l4-4h6M1 7v6M4 7v6M7 7v6M1 7h7M10 4v8" stroke={INK} />
        <path d="M4 9v5M7 9v5" stroke="#c22" />
        <circle cx="12" cy="7" r="3" fill="#ffd65a" stroke="#e8922a" />
      </>
    ),
  },
  {
    label: "显示约束",
    icon: (
      <>
        <path d="M1 0v15M15 0v7M2 3h12M4 1 2 3l2 2M12 1l2 2-2 2" stroke={INK} />
        <path d="M2 12h7" stroke={INK} strokeDasharray="1 1" />
        <path d="M10 10h6v5h-6z" fill="#999" stroke={INK} />
        <path d="M11.500 10V7.500h3V10" stroke={INK} />
      </>
    ),
  },
];

function ViewControlBar() {
  return (
    <div className="flex h-[23px] items-center overflow-hidden bg-[#f0f0f0] pb-0.5 pl-[43px]">
      <span className="w-[65px] shrink-0 font-['Liberation_Mono',monospace] text-[13px] whitespace-pre text-black">: 100</span>
      <div className="flex gap-3">
        {viewControls.map((control) => (
          <IconButton key={control.label} label={control.label} className="size-4">
            <Svg size={16}>{control.icon}</Svg>
          </IconButton>
        ))}
        <IconButton label="收起" className="h-4 w-2">
          <svg width="8" height="10" viewBox="0 0 8 10" fill="none">
            <path d="M6.500 1 2 5l4.500 4" stroke="#444" strokeWidth="1.500" />
          </svg>
        </IconButton>
      </div>
    </div>
  );
}

/* ---------- numbered callouts over the window ---------- */

function Callouts() {
  return (
    <svg width="871" height="1012" viewBox="0 0 871 1012" fill="none" className="pointer-events-none absolute top-0 left-0 z-20 max-w-none">
      <g fill="#fc3b3b" stroke="#fc3b3b" strokeWidth=".600">
        <path d="M204 283l20 .500-1.500 5.500L616 510 219.500 295 217 299z" />
        <path d="M156 616.500l19 .500-1.500 4.500L597 834 170 628l-2 3.500z" />
      </g>
      <g stroke="#fc3b3b" strokeWidth="3">
        <path d="M598.500 463.500h47v54h-47zM579.500 785.500h43v55h-43z" />
      </g>
      <g fill="#fc3b3b" fontSize="24" textAnchor="middle">
        <text x="622" y="502">1</text>
        <text x="604" y="822">2</text>
      </g>
    </svg>
  );
}

export default function App() {
  return (
    <div className="relative flex min-h-screen flex-col overflow-hidden bg-white font-['Noto_Sans','Noto_Sans_CJK_SC',sans-serif] text-[15px] leading-5 text-black">
      <QuickAccess />
      <Tabs />
      <IconButton label="应用程序菜单" className="absolute top-0 left-0 h-10 w-10 gap-px border-r border-b border-black bg-linear-to-b from-[#c9c9c9] to-[#8e8e8e]">
        <svg width="26" height="30" viewBox="0 0 26 30">
          <path d="M5 5 14 1l5 5-1 8-5 4-3-2-3 10H1z" fill="#1c3f86" />
          <path d="M5 5 14 1l-1 8-5 3z" fill="#0f2557" />
          <path d="M14 1l5 5-1 8-5-5z" fill="#2d5cae" />
          <path d="M1 26l4-12 5 2-3 10z" fill="#2a57a8" />
          <path d="M10 15l5 1 9 8-5 2z" fill="#142e6a" />
        </svg>
        <Caret color="#222" />
      </IconButton>
      <Ribbon />
      <OptionsBar />
      <main className="flex flex-1">
        <Properties />
        <div className="flex min-w-0 flex-1 flex-col border-t-2 border-l-2 border-[#6e6e6e]">
          <div className="flex-1 overflow-hidden bg-white">
            <FloorPlan />
          </div>
          <ViewControlBar />
        </div>
      </main>
      <footer className="h-[5px] border-t border-[#8a8a8a] bg-[#e6e6e6]" />
      <Callouts />
    </div>
  );
}
